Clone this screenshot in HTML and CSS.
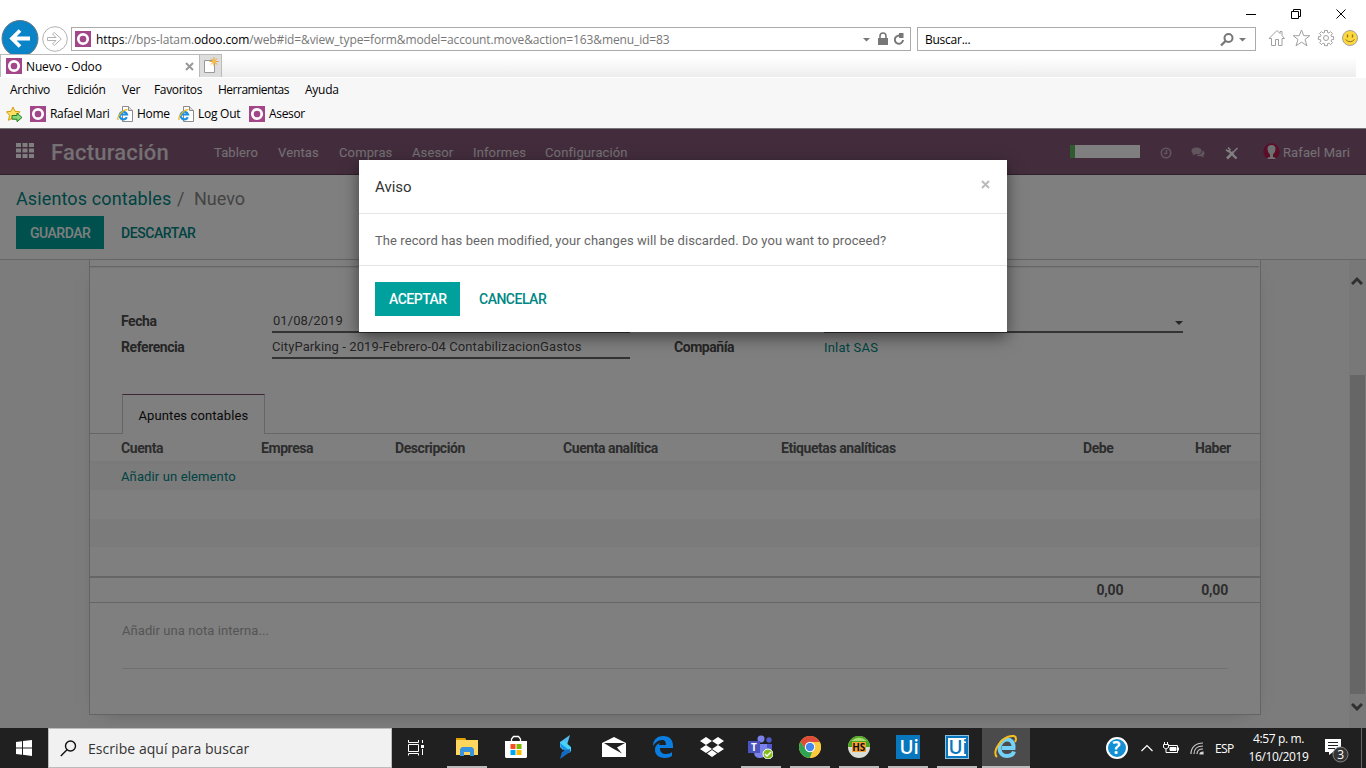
FILE: index.html
```html
<!DOCTYPE html>
<html lang="es">
<head>
<meta charset="utf-8">
<title>Nuevo - Odoo</title>
<link rel="stylesheet" href="styles.css">
</head>
<body>
<svg class="defs" width="0" height="0">
  <symbol id="odoo" viewBox="0 0 16 16"><rect width="16" height="16" fill="#a24689"/><circle cx="8" cy="8" r="4.7" fill="none" stroke="#fff" stroke-width="2.7"/></symbol>
  <symbol id="iepage" viewBox="0 0 16 16"><path d="M5.500.5h6l4 4v11h-10z" fill="#fff" stroke="#8b8b8b"/><path d="M11.500.5v4h4" fill="#ddd" stroke="#8b8b8b"/><path d="M9.800 11.200A3.800 3.800 0 1 1 10 8.500H3" fill="none" stroke="#1c8fe0" stroke-width="2.200"/><path d="M1.200 14C-.5 11 5.500 3.500 10.500 3.600" fill="none" stroke="#f0b71c" stroke-width="1.300"/></symbol>
</svg>
<div class="screen">
  <header class="browser">
    <div class="window-buttons">
      <svg width="104" height="14" fill="none" stroke="#000"><path d="M1 7.500h10M46.500 4.500h7v7h-7zM48.500 4.500v-2h7v7h-2M91.500 2.500l9 9M100.500 2.500l-9 9"/></svg>
    </div>
    <div class="address-row">
      <svg class="back" width="38" height="34" viewBox="0 0 38 34"><circle cx="19" cy="18.500" r="18" fill="#0a84c6" stroke="#697780"/><path d="M29 18.500H12M19 10.500L11 18.500l8 8" fill="none" stroke="#fff" stroke-width="3.800"/></svg>
      <svg class="forward" width="26" height="26" viewBox="0 0 26 26" fill="none" stroke="#b2b2b2"><circle cx="13" cy="13" r="12.300"/><path d="M5.500 11.500h8.500l-3.500-3.500 1.800-1.500 7 6.500-7 6.500-1.800-1.500 3.500-3.500H5.500z"/></svg>
      <div class="url-box">
        <svg width="16" height="16"><use href="#odoo"/></svg>
        <span class="url"><b>https</b>://bps-latam.<b>odoo.com</b>/web#id=&amp;view_type=form&amp;model=account.move&amp;action=163&amp;menu_id=83</span>
        <svg class="url-tools" width="46" height="16" viewBox="0 0 46 16"><path d="M1 7h7L4.500 10.500z" fill="#777"/><rect x="16" y="7" width="10" height="7" fill="#777"/><path d="M18 7V5a3 3 0 0 1 6 0V7" fill="none" stroke="#777" stroke-width="1.600"/><path d="M39.500 5.500a4.100 4.100 0 1 0 1.500 3.500" fill="none" stroke="#777" stroke-width="2"/><path d="M37 2l4.500 0v5H37z" fill="#777"/></svg>
      </div>
      <div class="search-box"><span>Buscar...</span>
        <svg width="28" height="16" viewBox="0 0 28 16"><circle cx="8.500" cy="7" r="4" fill="none" stroke="#777" stroke-width="2"/><path d="M5.500 10L1 14.500" stroke="#777" stroke-width="2.300"/><path d="M19 7h7l-3.500 3.500z" fill="#777"/></svg>
      </div>
      <svg class="ie-tools" width="90" height="18" viewBox="0 0 90 18" fill="none" stroke="#a0a0a0"><path d="M1 9.500L9 1.500l3 3v-2h2v4l2.500 3H14v7h-3.500v-6h-3v6H3.500v-7z"/><path d="M33.500 1l2.300 5.700h6L37 10.500l2 6.300-5.500-3.700-5.500 3.700 2-6.300-4.800-3.800h6z"/><path d="M56.500 1.500h3v2l1.500.6 1.500-1.500 2 2L63 6.100l.6 1.500h2v3h-2L63 12l1.500 1.600-2 2-1.500-1.500-1.500.6v2h-3v-2l-1.500-.6-1.500 1.500-2-2L53 12l-.6-1.400h-2v-3h2L53 6.100l-1.500-1.500 2-2L55 4.100l1.500-.6z"/><circle cx="58" cy="9" r="2.500"/><circle cx="82" cy="9" r="7.500" fill="#ffd83d"/><path d="M79.500 5.500v3M84.500 5.500v3" stroke="#8b762a" stroke-width="1.400"/><path d="M77.500 10.500q4.500 4.500 9 0" stroke="#8b762a"/></svg>
    </div>
    <div class="tab-row">
      <div class="tab"><svg width="16" height="16"><use href="#odoo"/></svg><span>Nuevo - Odoo</span><svg class="tab-x" width="9" height="9" stroke="#999" stroke-width="2"><path d="M1 1l7 7M8 1L1 8"/></svg></div>
      <div class="new-tab"><svg width="16" height="17"><path d="M1.500 3.500h10v12h-10z" fill="#fff" stroke="#999"/><path d="M11 0v9M6.500 4.500h9M8 1.500l6 6M14 1.500l-6 6" stroke="#e5a329"/><circle cx="11" cy="4.500" r="2" fill="#f4bd50"/></svg></div>
      <div class="tab-shade"></div>
    </div>
    <nav class="menu-row"><span>Archivo</span><span>Edición</span><span>Ver</span><span>Favoritos</span><span>Herramientas</span><span>Ayuda</span></nav>
    <div class="favorites">
      <svg class="fav-star" width="17" height="16"><path d="M7 1l2 4.300 5 .5-3.500 3.500 1 5L7 12l-4.500 2.300 1-5L.5 5.800l4.500-.5z" fill="#ffdf62" stroke="#d69a12"/><path d="M6 9.500h5V7l5 4.500-5 4.200v-2.500H6z" fill="#8bd87a" stroke="#268126"/></svg>
      <span class="fav f1"><svg width="16" height="16"><use href="#odoo"/></svg>Rafael Mari</span>
      <span class="fav f2"><svg width="16" height="16"><use href="#iepage"/></svg>Home</span>
      <span class="fav f3"><svg width="16" height="16"><use href="#iepage"/></svg>Log Out</span>
      <span class="fav"><svg width="16" height="16"><use href="#odoo"/></svg>Asesor</span>
    </div>
  </header>

  <main class="odoo">
    <nav class="navbar">
      <svg class="apps" width="18" height="15" fill="#fff"><path d="M0 0h5v4H0zM6.500 0h5v4h-5zM13 0h5v4h-5zM0 5.500h5v4H0zM6.500 5.500h5v4h-5zM13 5.500h5v4h-5zM0 11h5v4H0zM6.500 11h5v4h-5zM13 11h5v4h-5z"/></svg>
      <span class="brand">Facturación</span>
      <div class="nav-items"><span>Tablero</span><span>Ventas</span><span>Compras</span><span>Asesor</span><span>Informes</span><span>Configuración</span></div>
      <div class="progress"><div class="progress-fill"></div></div>
      <svg class="clock" width="12" height="12" fill="none" stroke="#c3adbd" stroke-width="1.600"><circle cx="6" cy="6" r="4.700"/><path d="M6.500 3v3.500H4"/></svg>
      <svg class="chat" width="14" height="12" fill="#c3adbd"><path d="M5.500.5C2.500.5.500 2 .500 4c0 1.200.7 2 1.700 2.700L1.500 8.500l3-1.200h1c3 0 5-1.500 5-3.400S8.500.5 5.500.5z"/><path d="M11.500 3.500c1.200.6 2 1.500 2 2.700 0 1-.6 1.700-1.300 2.300l.8 2-3-1.300c-2 .2-3.500-.2-4.500-1.200 3.500 0 6-1.500 6-4.500z"/></svg>
      <svg class="toolsx" width="14" height="13" fill="none" stroke="#fff"><path d="M4 4l7.500 7.500" stroke-width="2.400"/><path d="M1 2.500l2 2 2-2-2-2" stroke-width="1.500"/><path d="M2 11.500L8.500 5" stroke-width="2.600"/><path d="M8.500 5l4-4" stroke-width="1.500"/></svg>
      <svg class="avatar" width="17" height="17"><circle cx="8.500" cy="8.500" r="8.200" fill="#b71c50"/><path d="M4 16q1-2 3-2v-2.500Q4.500 9 4.500 6q0-4 4-4t4 4q0 3-2.500 5.500V14q2 0 3 2z" fill="#dbe3e5"/></svg>
      <span class="user">Rafael Mari</span>
    </nav>
    <section class="control-panel">
      <div class="breadcrumb"><span class="crumb">Asientos contables</span><span class="sep">/</span><span class="current">Nuevo</span></div>
      <div class="actions"><button class="btn primary">GUARDAR</button><button class="btn link discard">DESCARTAR</button></div>
    </section>
    <div class="content">
      <section class="sheet">
        <div class="sheet-top"></div>
        <div class="fields">
          <label>Fecha</label><div class="input date">01/08/2019</div><label class="second"></label><div class="input select"><svg width="8" height="4"><path d="M0 0h8L4 4z" fill="#4c4c4c"/></svg></div>
          <label>Referencia</label><div class="input reference">CityParking - 2019-Febrero-04 ContabilizacionGastos</div><label class="second">Compañía</label><div class="company">Inlat SAS</div>
        </div>
        <div class="note-tabs"><div class="note-tab">Apuntes contables</div></div>
        <div class="list-head"><span>Cuenta</span><span>Empresa</span><span>Descripción</span><span>Cuenta analítica</span><span>Etiquetas analíticas</span><span>Debe</span><span>Haber</span></div>
        <div class="row striped first"><span>Añadir un elemento</span></div>
        <div class="row"></div><div class="row striped third"></div><div class="row"></div>
        <div class="totals"><span>0,00</span><span>0,00</span></div>
        <div class="internal-note">Añadir una nota interna...</div>
      </section>
      <div class="scrollbar">
        <svg class="up" width="12" height="9"><path d="M1 8l5-5 5 5" fill="none" stroke="#606060" stroke-width="3"/></svg>
        <div class="thumb"></div>
        <svg class="down" width="12" height="9"><path d="M1 1l5 5 5-5" fill="none" stroke="#606060" stroke-width="3"/></svg>
      </div>
    </div>
    <div class="backdrop"></div>
    <section class="dialog">
      <header class="dialog-head"><span>Aviso</span><svg width="9" height="9" stroke="#bbb" stroke-width="2"><path d="M1 1l7 7M8 1L1 8"/></svg></header>
      <div class="dialog-body">The record has been modified, your changes will be discarded. Do you want to proceed?</div>
      <footer class="dialog-foot"><button class="btn primary accept">ACEPTAR</button><button class="btn link cancel">CANCELAR</button></footer>
    </section>
  </main>

  <footer class="taskbar">
    <div class="start"><svg width="16" height="16" fill="#fff"><path d="M0 2l6-.8v6.300H0zM7 1.100L16 0v7.500H7zM0 8.500h6v6.200L0 14zM7 8.500h9V16l-9-1.200z"/></svg></div>
    <div class="task-search"><svg width="17" height="17" fill="none" stroke="#111" stroke-width="1.400"><circle cx="10.500" cy="6" r="5"/><path d="M7 9.700L.8 16"/></svg><span>Escribe aquí para buscar</span></div>
    <div class="apps-row">
      <div class="task-view"><svg width="17" height="16" fill="none" stroke="#fff"><path d="M.5 0v2.500h10V0M.5 4.500h10v7H.5zM.5 15.500v-2h10v2M14.500 0v3M14.500 9v6"/><path d="M13 5h3v3h-3z" fill="#fff" stroke="none"/></svg></div>
      <div class="app open folder"><svg width="22" height="20"><path d="M0 1h9l1 2h12v15H0z" fill="#ffd75e"/><path d="M0 1h9l1 2H0z" fill="#dfa000"/><path d="M4 19v-7l2-2h10l2 2v7h-4v-4H8v4z" fill="#3993de"/></svg></div>
      <div class="app"><svg width="24" height="24"><path d="M7.500 6V4l2-2.500h5l2 2.500v2" fill="none" stroke="#fff" stroke-width="1.300"/><path d="M1 6h22v16l-1 1H2l-1-1z" fill="#fff"/><path d="M6.500 9h5v5h-5z" fill="#f25022"/><path d="M12.500 9h5v5h-5z" fill="#7fba00"/><path d="M6.500 15h5v5h-5z" fill="#00a4ef"/><path d="M12.500 15h5v5h-5z" fill="#ffb900"/></svg></div>
      <div class="app"><svg width="14" height="24"><path d="M12 0L2 7v5l3 3 4-5z" fill="#52bdf5"/><path d="M2 8l4-2 7 6v4l-2 2z" fill="#49d3f6"/><path d="M2 8l9 7 1 2-3 1-6-6z" fill="#1995ed"/><path d="M12 14v3L2 24l2-7 4-2z" fill="#166bc0"/></svg></div>
      <div class="app"><svg width="24" height="20"><path d="M0 6L12 0l12 6v14H0z" fill="#fff"/><path d="M2 6h21l-8 4.500 5 6L10 11z" fill="#202020"/></svg></div>
      <div class="app"><svg width="20" height="22"><path d="M0 10C0 3 5 0 10 0c7 0 10 4 10 10v2H7c0 4 2 6 6 6 3 0 5-1 6-2v4c-2 1-4 2-7 2-7 0-10-4-10-8 0-4 2-6 5-7-1 1-1 2-1 2h7c0-3-1-5-4-5-4 0-7 3-9 6z" fill="#0a7de0"/></svg></div>
      <div class="app"><svg width="24" height="20" fill="#fff"><path d="M6 0l6 4-6 4-6-4zM18 0l6 4-6 4-6-4zM6 8l6 4-6 4-6-4zM18 8l6 4-6 4-6-4zM12 13l5 3.500-5 3.500-5-3.500z"/></svg></div>
      <div class="app open"><svg width="25" height="24"><circle cx="13" cy="4" r="3.500" fill="#7b83eb"/><circle cx="21" cy="5" r="2.700" fill="#5059c9"/><path d="M16 9h8v9q-3 5-8 3z" fill="#5059c9"/><path d="M6 9h13v8q-1 6-7 6t-6-6z" fill="#7b83eb"/><rect y="6" width="12" height="12" fill="#4b53bc"/><text x="3" y="15.500" class="teams-letter">T</text><circle cx="20" cy="19" r="5" fill="#83bd19" stroke="#fff"/><path d="M17 19l2 2 4-4" fill="none" stroke="#fff" stroke-width="1.500"/></svg></div>
      <div class="app open"><svg width="22" height="22"><circle cx="11" cy="11" r="11" fill="#fbca3e"/><path d="M11 22A11 11 0 0 1 1.500 5.500L7 14l6 2z" fill="#2fa451"/><path d="M11 11l-4 3-5.500-8.500a11 11 0 0 1 19 0z" fill="#df4b39"/><path d="M11 6h9.800A11 11 0 0 1 11 22l4-9z" fill="#fbca3e"/><circle cx="11" cy="11" r="5.200" fill="#fff"/><circle cx="11" cy="11" r="4.200" fill="#4587ed"/></svg></div>
      <div class="app open"><svg width="24" height="24"><circle cx="12" cy="12" r="11" fill="#d9ded7"/><path d="M1 12a11 11 0 0 1 22 0z" fill="#4ca51d"/><path d="M4 6q8-7 16 0z" fill="#a7dc75"/><rect x="5" y="7" width="14" height="10" fill="#f6a137"/><text x="5.200" y="15.700" class="hs-text">HS</text></svg></div>
      <div class="app open"><svg width="24" height="24"><rect width="24" height="24" fill="#0877bd"/><text x="3.500" y="19" class="ui-text">Ui</text></svg></div>
      <div class="app open"><svg width="24" height="24"><rect width="24" height="24" fill="#0877bd"/><rect x=".5" y=".5" width="23" height="23" fill="none" stroke="#8cc0e0"/><rect x="3" y="3" width="18" height="18" fill="#fff"/><text x="3.500" y="19" class="ui-text blue">Ui</text></svg></div>
      <div class="app open active"><svg width="24" height="24"><path d="M20 16.500c-1 3.500-4 4.500-7 4.500-5 0-7.500-3.500-7.500-8S9 4.500 13 4.500s7 3 6.500 8.500H8" fill="none" stroke="#73d2f5" stroke-width="4"/><path d="M3 22C-3 17 8 0 20 1c3 1 2 4 1 6" fill="none" stroke="#f5be21" stroke-width="2"/></svg></div>
    </div>
    <div class="tray">
      <svg class="help" width="22" height="22"><circle cx="11" cy="11" r="10" fill="#138fd4" stroke="#fff" stroke-width="2"/><text x="6.500" y="17" class="help-text">?</text></svg>
      <svg class="chev" width="12" height="8"><path d="M.5 7L6 1.500 11.500 7" fill="none" stroke="#fff" stroke-width="1.200"/></svg>
      <svg class="battery" width="16" height="13" fill="none" stroke="#fff"><path d="M6 3.500h8.500v7H4.500M15.500 5.500v3M1.500 0v2M4.500 0v2M.5 2.500h5v3L3 7 .5 5.500zM3 7v3.500h2"/><path d="M7 5.500h6v3H7z" fill="#fff"/></svg>
      <svg class="wifi" width="14" height="13" fill="none" stroke="#ccc" stroke-width="1.200"><path d="M1 12C1 5 6 1 13 1M4 12c0-5 3-8 9-8M7 12c0-3 2-5 6-5"/><path d="M10 12q0-2 3-2v2z" fill="#fff"/></svg>
      <span class="lang">ESP</span>
      <div class="datetime"><span class="time">4:57 p. m.</span><span class="date-text">16/10/2019</span></div>
      <svg class="notice" width="24" height="25"><path d="M0 1h16v13H8l-4 3v-3H0z" fill="#fff"/><path d="M3 4.500h10M3 7.500h10M3 10.500h7" stroke="#222"/><circle cx="15.500" cy="16.500" r="7.500" fill="#353535" stroke="#858585"/><text x="12.200" y="20.800" class="notice-text">3</text></svg>
      <div class="show-desktop"></div>
    </div>
  </footer>
</div>
</body>
</html>
```

FILE: styles.css
```css
* { box-sizing: border-box; }
body { margin: 0; overflow: hidden; }
svg { display: block; flex: none; }
.defs { position: absolute; }
.screen { width: 1366px; height: 768px; display: flex; flex-direction: column; font-family: "Open Sans", "Noto Sans", sans-serif; font-size: 12px; color: #000; white-space: nowrap; }

.browser { height: 129px; flex: none; background: #f7f7f7; border-bottom: 1px solid #777; }
.window-buttons { height: 20px; background: #fff; display: flex; justify-content: flex-end; padding: 7px 17px 0 0; }
.address-row { height: 34px; background: #fff; display: flex; align-items: flex-start; padding-left: 1px; }
.forward { margin: 6px 3px 0 3px; }
.url-box, .search-box { height: 24px; border: 1px solid #ababab; display: flex; align-items: center; margin-top: 7px; }
.url-box { width: 840px; padding: 0 2px 0 3px; }
.url { margin-left: 5px; color: #777; letter-spacing: -.12px; flex: 1; }
.url b { color: #000; font-weight: 400; }
.search-box { width: 339px; margin-left: 6px; padding: 0 7px; justify-content: space-between; letter-spacing: -.25px; }
.ie-tools { margin: 9px 0 0 12px; }
.tab-row { height: 24px; display: flex; background: #fff; border-bottom: 1px solid #fff; }
.tab { width: 199px; display: flex; align-items: center; padding: 0 5px 0 5px; border-left: 1px solid #bbb; border-top: 1px solid #bbb; }
.tab span { margin-left: 4px; flex: 1; letter-spacing: -.15px; }
.new-tab { width: 23px; border: 1px solid #bbb; border-bottom: 0; background: #ddd; padding: 2px 3px; }
.tab-shade { flex: 1; background: linear-gradient(#fff 15%, #ededed); margin-right: 10px; }
.menu-row { height: 22px; display: flex; align-items: center; padding-left: 10px; letter-spacing: -.25px; }
.menu-row span:nth-child(1) { width: 57px; }
.menu-row span:nth-child(2) { width: 55px; }
.menu-row span:nth-child(3) { width: 32px; }
.menu-row span:nth-child(4) { width: 64px; letter-spacing: -.35px; }
.menu-row span:nth-child(5) { width: 87px; letter-spacing: -.5px; }
.favorites { height: 27px; display: flex; align-items: center; padding-left: 6px; letter-spacing: -.33px; }
.fav-star { margin-right: 7px; }
.fav { display: flex; align-items: center; gap: 4px; }
.f1 { width: 87px; }
.f2 { width: 61px; }
.f3 { width: 71px; letter-spacing: -.25px; }

.odoo { height: 599px; flex: none; position: relative; background: #f8f8f8; font-family: Roboto, sans-serif; font-size: 13px; color: #666; overflow: hidden; display: flex; flex-direction: column; }
.navbar { height: 46px; flex: none; background: #875a7b; border-bottom: 1px solid #5f4057; color: #fff; display: flex; align-items: center; padding: 1px 16px 0; }
.apps { margin-top: -3px; }
.brand { width: 163px; margin-left: 17px; font-size: 22px; font-weight: 500; letter-spacing: .2px; color: #e8e0e6; }
.nav-items { display: flex; flex: 1; color: #e8e0e6; letter-spacing: .13px; }
.nav-items span:nth-child(1) { width: 64px; }
.nav-items span:nth-child(2) { width: 61px; }
.nav-items span:nth-child(3) { width: 73px; }
.nav-items span:nth-child(4) { width: 61px; }
.nav-items span:nth-child(5) { width: 72px; }
.progress { width: 70px; height: 13px; background: #fff; margin-top: -1px; }
.progress-fill { width: 5px; height: 13px; background: #5cb85c; }
.clock { margin-left: 20px; margin-top: 1px; }
.chat { margin-left: 19px; margin-top: 1px; }
.toolsx { margin: 3px 0 0 20px; }
.avatar { margin: -1px 0 0 24px; }
.user { width: 67px; margin-left: 3px; color: #e8e0e6; letter-spacing: .1px; }

.control-panel { height: 85px; flex: none; background: #fff; border-bottom: 1px solid #ccc; padding: 11px 16px; }
.breadcrumb { height: 24px; display: flex; align-items: center; font-size: 18px; color: #888; }
.crumb { color: #008784; width: 161px; letter-spacing: .12px; }
.sep { width: 17px; }
.actions { display: flex; margin-top: 6px; gap: 3px; }
.btn { border: 0; border-radius: 0; height: 33px; padding: 0 14px; font: 500 14px Roboto, sans-serif; letter-spacing: -.5px; white-space: nowrap; }
.primary { background: #00a09d; color: #fff; width: 88px; }
.link { background: none; color: #008784; }
.discard { letter-spacing: -.42px; }
.content { flex: 1; min-height: 0; display: flex; justify-content: space-between; padding-left: 89px; }
.sheet { width: 1172px; height: 455px; background: #fff; border: 1px solid #c8c8c8; border-top: 0; box-shadow: 0 5px 20px -15px rgba(0,0,0,.6); }
.sheet-top { height: 7px; border-bottom: 1px solid #ccc; box-shadow: 0 1px 0 #eee; margin-right: 1px; }
.fields { height: 127px; padding: 40px 77px 0 32px; display: grid; grid-template-columns: 150px 358px 44px 150px 1fr; grid-template-rows: 26px 26px; align-items: end; color: #4c4c4c; }
.fields label { font-weight: 700; font-size: 14px; line-height: 24px; letter-spacing: -.45px; margin-left: -1px; }
.fields .second { grid-column: 4; margin-left: 0; }
.input { border-bottom: 2px solid #666; height: 22px; line-height: 20px; }
.date { padding-left: 1px; letter-spacing: .06px; }
.reference { letter-spacing: .1px; }
.select { display: flex; align-items: center; justify-content: flex-end; padding-top: 3px; }
.company { color: #008784; line-height: 23px; letter-spacing: .2px; }
.note-tabs { height: 40px; display: flex; border-bottom: 1px solid #ccc; padding-left: 32px; }
.note-tab { width: 143px; height: 40px; background: #fff; border: 1px solid #ccc; border-top-color: #7c4b70; border-bottom: 0; color: #111; padding: 13px 0 0 15.500px; letter-spacing: .1px; }
.list-head { height: 27px; display: grid; grid-template-columns: 140px 134px 168px 218px 302px 112px 1fr; padding: 0 0 0 31px; align-items: center; font-weight: 700; font-size: 14px; color: #5a5a5a; letter-spacing: -.43px; }
.row { height: 29px; padding: 0 31px; display: flex; align-items: center; color: #008784; letter-spacing: .13px; }
.striped { background: #f7f7f7; }
.first { background: linear-gradient(#f1f1f1, #f7f7f7 4px); padding-top: 2px; }
.third { height: 28px; }
.totals { height: 27px; border-top: 2px solid #ccc; border-bottom: 1px solid #ccc; display: flex; justify-content: flex-end; align-items: center; padding-right: 32px; gap: 78px; font-weight: 700; font-size: 14px; letter-spacing: -.2px; color: #5a5a5a; }
.internal-note { height: 66px; margin: 0 32px; padding: 20px 0 0; border-bottom: 1px solid #e0e0e0; color: #aaa; letter-spacing: .07px; }
.scrollbar { width: 17px; background: #f0f0f0; padding: 16px 1px 0; }
.up { margin-left: 1px; }
.thumb { margin-top: 90px; height: 319px; background: #cdcdcd; }
.down { margin: 9px 0 0 1px; }
.backdrop { position: absolute; inset: 0; background: rgba(0,0,0,.5); }
.dialog { position: absolute; left: 359px; top: 31px; width: 648px; height: 172px; background: #fff; box-shadow: 0 5px 15px rgba(0,0,0,.5); color: #666; }
.dialog-head { height: 54px; border-bottom: 1px solid #e5e5e5; display: flex; align-items: center; justify-content: space-between; padding: 0 17px 0 16px; font-size: 15px; color: #333; }
.dialog-head svg { margin-top: -4px; }
.dialog-body { height: 52px; border-bottom: 1px solid #e5e5e5; padding: 2px 16px 0; display: flex; align-items: center; letter-spacing: .08px; }
.dialog-foot { padding: 16px; display: flex; gap: 5px; }
.dialog-foot .btn { height: 34px; }
.dialog-foot .primary { width: 85px; }

.taskbar { height: 40px; flex: none; display: flex; background: #202020; color: #fff; }
.start { width: 48px; padding: 12px 16px; }
.task-search { width: 344px; background: #f1f1f1; border: 1px solid #bbb; color: #333; font-size: 14px; display: flex; align-items: center; padding-left: 11px; gap: 11px; letter-spacing: .05px; }
.apps-row { display: flex; flex: 1; padding-left: 1px; }
.task-view { width: 49px; padding: 12px 0 0 15px; }
.app { width: 49px; height: 40px; display: flex; align-items: center; justify-content: center; border-bottom: 2px solid transparent; }
.open { background: linear-gradient(#bbb, #bbb) 50% 100% / 40px 2px no-repeat; background-origin: border-box; background-clip: border-box; }
.active { background: #4b4b4b; border-bottom-color: #bbb; width: 48px; margin-left: 1px; }
.teams-letter { font: 700 10px "Open Sans", sans-serif; fill: #fff; }
.hs-text { font: 700 10px "Open Sans", sans-serif; fill: #111; }
.ui-text { font: 600 19px "Open Sans", sans-serif; fill: #fff; }
.blue { fill: #0877bd; }
.tray { width: 260px; display: flex; align-items: center; }
.help-text { font: 700 17px "Open Sans", sans-serif; fill: #fff; }
.chev { margin-left: 13px; }
.battery { margin-left: 10px; }
.wifi { margin-left: 11px; }
.lang { width: 34px; margin-left: 11px; letter-spacing: -.6px; }
.datetime { width: 59px; height: 40px; display: flex; flex-direction: column; align-items: center; line-height: 18px; padding-top: 2px; letter-spacing: -.38px; }
.notice { margin: 4px 0 0 17px; }
.notice-text { font: 12px "Open Sans", sans-serif; fill: #fff; }
.show-desktop { align-self: stretch; width: 1px; margin-left: 12px; background: #666; }
```
